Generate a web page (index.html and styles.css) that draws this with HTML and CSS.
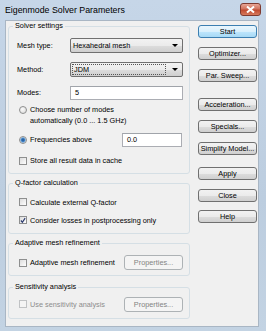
FILE: index.html
```html
<!DOCTYPE html>
<html lang="en">
<head>
  <meta charset="UTF-8" />
  <title>Eigenmode Solver Parameters</title>
  <link rel="stylesheet" href="styles.css">
</head>
<body>
<div class="window">
  <div class="titlebar">
    <span class="title">Eigenmode Solver Parameters</span>
    <span class="close"><svg width="9" height="7" viewBox="0 0 9 7"><path d="M1 0.5 L8 6.5 M8 0.5 L1 6.5" stroke="#fff" stroke-width="2"/></svg></span>
  </div>
  <div class="client">
    <div class="left">
      <fieldset class="group solver">
        <legend>Solver settings</legend>
        <div class="row r-mesh"><span class="lbl">Mesh type:</span><div class="combo">Hexahedral mesh<span class="arrow"></span></div></div>
        <div class="row r-method"><span class="lbl">Method:</span><div class="combo focus"><span class="focusbox">JDM</span><span class="arrow"></span></div></div>
        <div class="row r-modes"><span class="lbl">Modes:</span><div class="edit">5</div></div>
        <div class="row r-choose"><span class="radio"></span><span class="two">Choose number of modes<br>automatically (0.0 ... 1.5 GHz)</span></div>
        <div class="row r-freq"><span class="radio on"></span><span class="txt">Frequencies above</span><div class="edit small">0.0</div></div>
        <div class="row r-store"><span class="check"></span><span class="txt">Store all result data in cache</span></div>
      </fieldset>
      <fieldset class="group qfactor">
        <legend>Q-factor calculation</legend>
        <div class="row r-calc"><span class="check"></span><span class="txt">Calculate external Q-factor</span></div>
        <div class="row r-loss"><span class="check on"><svg width="7" height="7" viewBox="0 0 7 7"><path d="M1 3.5 L2.8 5.5 L6 0.8" fill="none" stroke="#2b3a6e" stroke-width="1.4"/></svg></span><span class="txt">Consider losses in postprocessing only</span></div>
      </fieldset>
      <fieldset class="group adaptive">
        <legend>Adaptive mesh refinement</legend>
        <div class="row r-adapt"><span class="check"></span><span class="txt">Adaptive mesh refinement</span><button class="btn props" disabled>Properties...</button></div>
      </fieldset>
      <fieldset class="group sens">
        <legend>Sensitivity analysis</legend>
        <div class="row r-sens disabled"><span class="check"></span><span class="txt">Use sensitivity analysis</span><button class="btn props" disabled>Properties...</button></div>
      </fieldset>
    </div>
    <div class="right">
      <button class="btn default b-start">Start</button>
      <button class="btn b-opt">Optimizer...</button>
      <button class="btn b-par">Par. Sweep...</button>
      <button class="btn b-acc">Acceleration...</button>
      <button class="btn b-spec">Specials...</button>
      <button class="btn b-simp">Simplify Model...</button>
      <button class="btn b-apply">Apply</button>
      <button class="btn b-close">Close</button>
      <button class="btn b-help">Help</button>
    </div>
  </div>
</div>
</body>
</html>
```

FILE: styles.css
```css
body{margin:0;width:266px;height:331px;overflow:hidden;background:linear-gradient(#c6d6e8,#bccddf 60%,#c3d3e3);font-family:"Liberation Sans",Arial,sans-serif;font-size:7.3px;color:#000;}
.window{display:flex;flex-direction:column;height:331px;}
.titlebar{height:20px;display:flex;align-items:center;padding:0 5px 0 5px;box-sizing:border-box;}
.title{flex:1;font-size:8.8px;line-height:10px;}
.close{width:21px;height:13px;box-sizing:border-box;border:1px solid #7e3a30;border-radius:3px;background:linear-gradient(#e8a696,#d0715c 45%,#c04a30 55%,#d77a5e);display:flex;align-items:center;justify-content:center;margin-top:-1px;}
.client{flex:1;margin:0 7px 4px 5px;background:#f0f0f0;border:1px solid #a9b6c4;display:flex;gap:8px;padding:0 1px 0 2px;}
.left{width:182px;display:flex;flex-direction:column;}
.right{width:59px;display:flex;flex-direction:column;}

/* group boxes */
fieldset.group{margin:0;border:1px solid #d5dfe5;border-radius:3px;padding:0 6px 5px 8px;min-width:0;}
legend{padding:0 2px;margin-left:-4px;line-height:10px;height:10px;}
.qfactor,.adaptive{margin-top:4px !important;}
.sens{margin-top:6px !important;}
.qfactor{padding-bottom:6px !important;}
.sens{padding-bottom:7px !important;}

.row{display:flex;align-items:center;height:15px;}
.lbl{width:53px;}
.txt{margin-left:3px;}
.r-mesh{margin-top:7px;}
.r-method{margin-top:9px;}
.r-modes{margin-top:8px;}
.r-choose{margin-top:4px;height:22px;align-items:flex-start;}
.r-choose .radio{margin-top:2px;}
.two{line-height:11px;margin-left:3px;}
.r-freq{margin-top:6px;}
.r-store{margin-top:6px;}
.r-calc{margin-top:7px;height:14px;}
.r-loss{margin-top:4px;height:14px;}
.r-adapt{margin-top:7px;}
.r-sens{margin-top:5px;height:14px;}

/* controls */
.combo{flex:1;height:15px;box-sizing:border-box;border:1px solid #707070;border-radius:2px;background:linear-gradient(#f2f2f2,#ebebeb 50%,#dddddd 51%,#cfcfcf);display:flex;align-items:center;padding-left:2px;position:relative;}
.arrow{margin-left:auto;margin-right:4px;width:0;height:0;border-left:3px solid transparent;border-right:3px solid transparent;border-top:3px solid #000;}
.combo.focus{padding-left:1px;}
.focusbox{flex:1;height:9px;line-height:9px;border:1px dotted #555;margin-right:6px;padding-left:1px;}
.edit{flex:1;height:14px;box-sizing:border-box;border:1px solid #abadb3;border-top-color:#a0a4aa;background:#fff;padding-left:4px;line-height:12px;}
.edit.small{flex:none;width:60px;margin-left:auto;margin-right:1px;}
.radio{width:8px;height:8px;border-radius:50%;border:1px solid #8e8f8f;background:radial-gradient(circle at 40% 35%,#fbfbfb,#d6d6d6);margin-left:2px;flex:none;box-sizing:border-box;}
.radio.on{background:radial-gradient(circle,#1f4e87 0,#3f7fc2 1.6px,#9cc1e4 2.6px,#eaeaea 3.2px);}
.check{width:8px;height:8px;box-sizing:border-box;border:1px solid #8e8f8f;background:linear-gradient(135deg,#dcdcdc,#fefefe);margin-left:2px;flex:none;display:flex;align-items:center;justify-content:center;}
.check svg{display:block;}
.disabled{color:#8d8d8d;}
.disabled .check{border-color:#c0c2c4;background:#f4f4f4;}

.btn{font:inherit;font-size:7.3px;color:#000;height:13px;box-sizing:border-box;padding:0;border:1px solid #707070;border-radius:3px;background:linear-gradient(#f2f2f2,#ebebeb 50%,#dddddd 51%,#cfcfcf);line-height:11px;}
.btn.default{border-color:#3c7fb1;background:linear-gradient(#eaf6fd,#d9f0fc 50%,#bee6fd 51%,#a7d9f5);}
.btn.props{width:59px;height:15px;margin-left:auto;border-color:#adb2b5;background:#f4f4f4;color:#838383;}
.b-start{margin-top:4px;}
.b-opt,.b-par,.b-spec,.b-close{margin-top:9px;}
.b-acc{margin-top:16px;}
.b-simp{margin-top:9px;}
.b-apply{margin-top:12px;}
.b-help{margin-top:8px;}
```
